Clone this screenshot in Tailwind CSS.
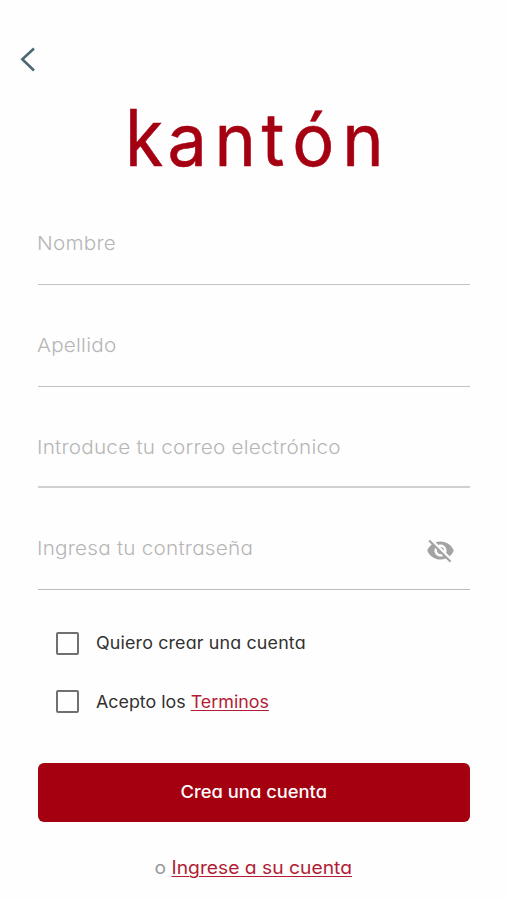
<!DOCTYPE html>
<html lang="es">
<head>
<meta charset="utf-8">
<title>kantón</title>
<script src="https://cdn.jsdelivr.net/npm/@tailwindcss/browser@4"></script>
</head>
<body class="bg-[#fefefe] font-['Inter','Open_Sans',sans-serif] [font-feature-settings:'cv11','ss03'] text-[#303030]">
<main class="w-[507px] h-[900px] overflow-hidden flex flex-col">
  <header class="h-[90px] pt-[46px] pl-[19px]">
    <svg class="w-[18px] h-[27px]" viewBox="0 0 18 27" fill="none" stroke="#4b6973" stroke-width="2.6"><path d="M15 2.5L3.300 13.300L15 24.500"/></svg>
  </header>
  <svg class="w-[507px] h-[90px] shrink-0 overflow-visible" viewBox="0 90 507 90" role="img" aria-label="kantón">
    <g fill="#a50012" stroke="#a50012" stroke-width="0.6" class="font-['Inter',sans-serif] [font-feature-settings:normal]">
      <text transform="translate(125 166) scale(0.88 1)" font-size="79">k</text>
      <text transform="translate(0 166) scale(0.96 1)" x="174.500 223.500 272.500 304.500 356.500" font-size="73">antón</text>
    </g>
  </svg>
  <form class="flex flex-col px-[37.500px] pt-[40px]">
    <div class="h-[65px] border-b-[1.500px] border-[#c4c4c4] pt-[9px]"><span class="block w-fit origin-left scale-x-[1.09] -ml-[0.500px] text-[19px] leading-[30px] font-light text-[#b6b6b6] tracking-[0.200px]">Nombre</span></div>
    <div class="h-[102px] border-b-[1.500px] border-[#c0c4c4] pt-[46px]"><span class="block w-fit origin-left scale-x-[1.09] -ml-[0.500px] text-[19px] leading-[30px] font-light text-[#b6b6b6] tracking-[0.200px]">Apellido</span></div>
    <div class="h-[101px] border-b-2 border-[#d0d0d0] pt-[46px]"><span class="block w-fit origin-left scale-x-[1.09] -ml-[1px] text-[19px] leading-[30px] font-light text-[#b6b6b6] tracking-[0.200px]">Introduce tu correo electrónico</span></div>
    <div class="h-[102px] border-b-[1.500px] border-[#bdbdbd] pt-[46px] flex justify-between items-start pr-[15px]">
      <span class="block w-fit origin-left scale-x-[1.09] -ml-[1px] text-[19px] leading-[30px] font-light text-[#b6b6b6] tracking-[0.200px]">Ingresa tu contraseña</span>
      <svg class="w-[29px] h-[29px] mt-[2px]" viewBox="0 0 24 24" fill="#a3a3a3"><path d="M12 7c2.760 0 5 2.240 5 5 0 .65-.13 1.260-.36 1.830l2.920 2.920c1.510-1.260 2.700-2.890 3.430-4.750-1.730-4.390-6-7.500-11-7.500-1.400 0-2.740.25-3.980.7l2.160 2.160C10.740 7.130 11.350 7 12 7zM2 4.270l2.280 2.280.46.46C3.080 8.300 1.780 10.020 1 12c1.730 4.390 6 7.500 11 7.500 1.550 0 3.030-.3 4.380-.84l.42.42L19.730 22 21 20.730 3.270 3 2 4.270zM7.530 9.800l1.550 1.550c-.05.21-.08.43-.08.65 0 1.660 1.340 3 3 3 .22 0 .44-.03.65-.08l1.550 1.550c-.67.33-1.410.53-2.200.53-2.760 0-5-2.240-5-5 0-.79.2-1.530.53-2.200zm4.310-.78l3.150 3.150.02-.16c0-1.660-1.340-3-3-3l-.17.01z"/></svg>
    </div>
    <div class="mt-[38px] ml-[18px] h-[30px] flex items-center">
      <span class="w-[23px] h-[23px] rounded-[2px] border-2 border-[#707070]"></span>
      <span class="ml-[17px] origin-left scale-x-[1.05] tracking-[0.150px] text-[17px] leading-[30px]">Quiero crear una cuenta</span>
    </div>
    <div class="mt-[28.500px] ml-[18px] h-[30px] flex items-center">
      <span class="w-[23px] h-[23px] rounded-[2px] border-2 border-[#707070]"></span>
      <span class="ml-[17px] origin-left scale-x-[1.05] text-[17px] leading-[30px]">Acepto los <a class="text-[#b21c34] underline decoration-1 underline-offset-2">Terminos</a></span>
    </div>
    <button type="button" class="mt-[46.500px] h-[59px] w-full rounded-[6px] bg-[#a50010] text-white text-[17px] font-medium"><span class="inline-block scale-x-[1.08]">Crea una cuenta</span></button>
  </form>
  <p class="mt-[31px] text-center text-[18px] leading-[30px] text-[#999]"><span class="inline-block scale-x-[1.07]">o <a class="text-[#b21c34] underline decoration-1 underline-offset-2">Ingrese a su cuenta</a></span></p>
</main>
</body>
</html>
